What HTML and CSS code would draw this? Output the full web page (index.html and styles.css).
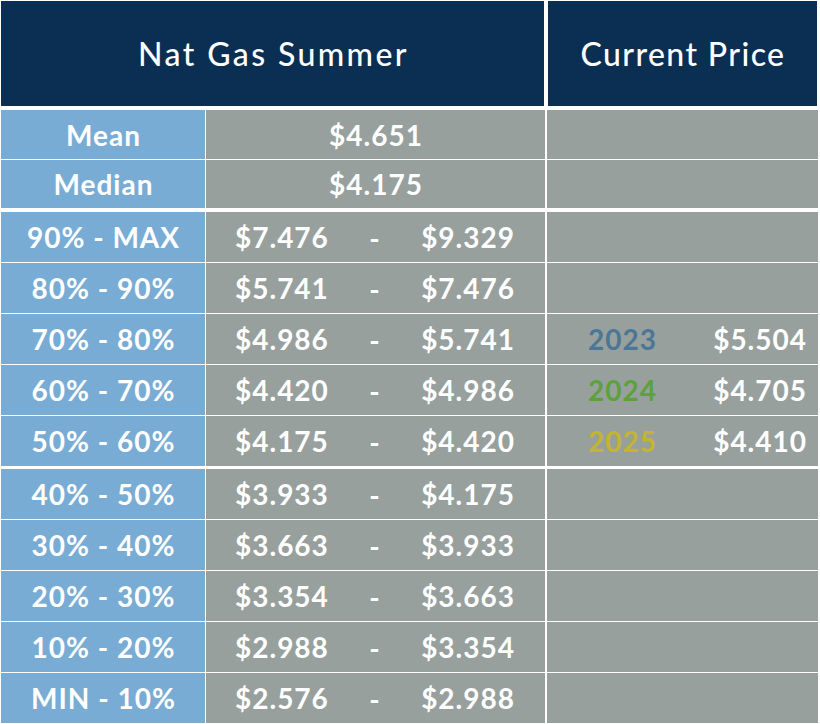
FILE: index.html
```html
<!DOCTYPE html>
<html>
<head>
<meta charset="utf-8">
<link rel="stylesheet" href="styles.css">
</head>
<body>
<div class="sheet">
  <div class="head">
    <div class="hcell hleft">Nat Gas Summer</div>
    <div class="hcell hright">Current Price</div>
  </div>
  <div class="group stats">
    <div class="lbl">Mean</div><div class="val single">$4.651</div><div class="cur"></div>
    <div class="lbl">Median</div><div class="val single">$4.175</div><div class="cur"></div>
  </div>
  <div class="group ranges">
    <div class="lbl">90% - MAX</div><div class="val"><span>$7.476</span><span class="dash">-</span><span>$9.329</span></div><div class="cur"></div>
    <div class="lbl">80% - 90%</div><div class="val"><span>$5.741</span><span class="dash">-</span><span>$7.476</span></div><div class="cur"></div>
    <div class="lbl">70% - 80%</div><div class="val"><span>$4.986</span><span class="dash">-</span><span>$5.741</span></div><div class="cur"><span class="yr y23">2023</span><span>$5.504</span></div>
    <div class="lbl">60% - 70%</div><div class="val"><span>$4.420</span><span class="dash">-</span><span>$4.986</span></div><div class="cur"><span class="yr y24">2024</span><span>$4.705</span></div>
    <div class="lbl">50% - 60%</div><div class="val"><span>$4.175</span><span class="dash">-</span><span>$4.420</span></div><div class="cur"><span class="yr y25">2025</span><span>$4.410</span></div>
  </div>
  <div class="group ranges last">
    <div class="lbl">40% - 50%</div><div class="val"><span>$3.933</span><span class="dash">-</span><span>$4.175</span></div><div class="cur"></div>
    <div class="lbl">30% - 40%</div><div class="val"><span>$3.663</span><span class="dash">-</span><span>$3.933</span></div><div class="cur"></div>
    <div class="lbl">20% - 30%</div><div class="val"><span>$3.354</span><span class="dash">-</span><span>$3.663</span></div><div class="cur"></div>
    <div class="lbl">10% - 20%</div><div class="val"><span>$2.988</span><span class="dash">-</span><span>$3.354</span></div><div class="cur"></div>
    <div class="lbl">MIN - 10%</div><div class="val"><span>$2.576</span><span class="dash">-</span><span>$2.988</span></div><div class="cur"></div>
  </div>
</div>
</body>
</html>
```
FILE: styles.css
```css
html, body {
  margin: 0;
  padding: 0;
  background: #ffffff;
}
body {
  font-family: "Lato", "Liberation Sans", sans-serif;
  color: #ffffff;
  width: 820px;
  height: 724px;
  overflow: hidden;
}
.sheet {
  padding: 1px 2px 0 1px;
  display: flex;
  flex-direction: column;
}
.head {
  display: flex;
  gap: 4px;
  height: 105px;
  margin-right: 1px;
}
.hcell {
  background: #0b2f52;
  display: flex;
  align-items: center;
  justify-content: center;
  font-size: 32px;
  font-weight: 500;
}
.hleft { width: 543px; letter-spacing: 2.4px; text-indent: 2px; }
.hright { flex: 1; letter-spacing: 1.4px; text-indent: 1px; }
.group {
  display: grid;
  grid-template-columns: 204px 339px 1fr;
  column-gap: 1px;
  row-gap: 1px;
  margin-top: 4px;
}
.group.stats { grid-template-rows: 49px 48px; }
.group.ranges { grid-template-rows: repeat(5, 50px); }
.group .cur { margin-left: 1px; }
.group.last { margin-top: 3px; }
.lbl, .val, .cur {
  display: flex;
  align-items: center;
  font-size: 28px;
  font-weight: 700;
  letter-spacing: 1px;
}
.lbl {
  background: #78acd4;
  justify-content: center;
  text-indent: 1px;
}
.val {
  background: #98a09e;
  justify-content: space-between;
  padding: 0 30px 0 29px;
}
.val.single { justify-content: center; padding: 0 0 0 1px; }
.dash { padding-top: 2px; }
.cur {
  background: #98a09e;
  justify-content: space-between;
  padding: 0 11px 0 41px;
}
.y23 { color: #4b7695; }
.y24 { color: #5ca13b; }
.y25 { color: #c3b62d; }
```
